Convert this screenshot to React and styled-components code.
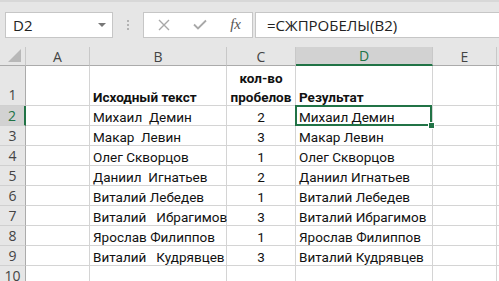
import React from "react";
import styled, { createGlobalStyle } from "styled-components";

const GlobalStyle = createGlobalStyle`
  body {
    margin: 0;
    background: #ffffff;
    font-family: Roboto, "Open Sans", sans-serif;
  }
`;

const columns = ["A", "B", "C", "D", "E"];

const rows = [
  { num: 2, src: "Михаил  Демин", count: "2", res: "Михаил Демин" },
  { num: 3, src: "Макар  Левин", count: "3", res: "Макар Левин" },
  { num: 4, src: "Олег Скворцов", count: "1", res: "Олег Скворцов" },
  { num: 5, src: "Даниил  Игнатьев", count: "2", res: "Даниил Игнатьев" },
  { num: 6, src: "Виталий Лебедев", count: "1", res: "Виталий Лебедев" },
  { num: 7, src: "Виталий   Ибрагимов", count: "3", res: "Виталий Ибрагимов" },
  { num: 8, src: "Ярослав Филиппов", count: "1", res: "Ярослав Филиппов" },
  { num: 9, src: "Виталий   Кудрявцев", count: "3", res: "Виталий Кудрявцев" },
];

function App() {
  return (
    <Window>
      <GlobalStyle />
      <FormulaBar>
        <NameBox>
          <span>D2</span>
          <DropArrow />
        </NameBox>
        <Grip>
          <i />
          <i />
          <i />
        </Grip>
        <IconBox>
          <svg width="12" height="12" viewBox="0 0 12 12">
            <path d="M1 1 L11 11 M11 1 L1 11" stroke="#a8a8a8" strokeWidth="1.4" fill="none" />
          </svg>
          <svg width="14" height="11" viewBox="0 0 14 11">
            <path d="M1 5.5 L5 9.5 L13 1.5" stroke="#a8a8a8" strokeWidth="1.8" fill="none" />
          </svg>
          <Fx>fx</Fx>
        </IconBox>
        <FormulaInput>=СЖПРОБЕЛЫ(B2)</FormulaInput>
      </FormulaBar>

      <Sheet>
        <Corner>
          <svg width="13" height="13" viewBox="0 0 13 13">
            <path d="M13 0 L13 13 L0 13 Z" fill="#b8b8b8" />
          </svg>
        </Corner>
        {columns.map((c) => (
          <ColHead key={c} selected={c === "D"}>
            {c}
          </ColHead>
        ))}
        <ColHead />

        <RowHead tall>1</RowHead>
        <Cell />
        <Cell bold>Исходный текст</Cell>
        <Cell bold center>
          <Stack>
            <span>кол-во</span>
            <span>пробелов</span>
          </Stack>
        </Cell>
        <Cell bold>Результат</Cell>
        <Cell />
        <Cell />

        {rows.map((r) => (
          <React.Fragment key={r.num}>
            <RowHead selected={r.num === 2}>{r.num}</RowHead>
            <Cell />
            <Cell>{r.src}</Cell>
            <Cell center>{r.count}</Cell>
            <Cell active={r.num === 2}>{r.res}</Cell>
            <Cell />
            <Cell />
          </React.Fragment>
        ))}

        <RowHead>10</RowHead>
        <Cell />
        <Cell />
        <Cell />
        <Cell />
        <Cell />
        <Cell />
      </Sheet>
    </Window>
  );
}

export default App;

const Window = styled.div`
  width: 499px;
  height: 281px;
  overflow: hidden;
  background: #ffffff;
`;

const FormulaBar = styled.div`
  height: 45px;
  display: flex;
  align-items: center;
  padding-left: 5px;
  background: #e6e6e6;
  border-top: 2px solid #d8d8d8;
`;

const NameBox = styled.div`
  width: 93px;
  height: 24px;
  padding: 0 6px 0 7px;
  display: flex;
  align-items: center;
  justify-content: space-between;
  background: #ffffff;
  border: 1px solid #c6c6c6;
  font: 15px "Open Sans", sans-serif;
  color: #222222;
`;

const DropArrow = styled.span`
  width: 0;
  height: 0;
  border-left: 4px solid transparent;
  border-right: 4px solid transparent;
  border-top: 4px solid #777777;
`;

const Grip = styled.div`
  width: 30px;
  display: flex;
  flex-direction: column;
  align-items: center;
  gap: 2px;

  i {
    width: 2px;
    height: 2px;
    background: #b2b2b2;
  }
`;

const IconBox = styled.div`
  width: 110px;
  height: 26px;
  display: flex;
  align-items: center;
  justify-content: space-between;
  padding: 0 11px 0 14px;
  box-sizing: border-box;
  background: #ffffff;
  border: 1px solid #c6c6c6;
`;

const Fx = styled.span`
  font: italic 15px "Liberation Serif", serif;
  color: #555555;
`;

const FormulaInput = styled.div`
  flex: 1;
  height: 24px;
  margin-left: 2px;
  padding-left: 11px;
  display: flex;
  align-items: center;
  background: #ffffff;
  border: 1px solid #c6c6c6;
  border-right: none;
  font: 15px "Open Sans", sans-serif;
  color: #222222;
`;

const Sheet = styled.div`
  display: grid;
  grid-template-columns: 26px 64px 137px 69px 137px 64px 1fr;
  grid-template-rows: 19px 40px;
  grid-auto-rows: 20px;
  background: #e6e6e6;
`;

const Corner = styled.div`
  display: flex;
  align-items: flex-end;
  justify-content: flex-end;
  padding: 0 4px 3px 0;
  border-right: 1px solid #c8c8c8;
  border-bottom: 1px solid #ababab;
`;

const ColHead = styled.div`
  display: flex;
  align-items: center;
  justify-content: center;
  background: ${(p) => (p.selected ? "#d2d2d2" : "#e6e6e6")};
  color: ${(p) => (p.selected ? "#217346" : "#444444")};
  border-right: 1px solid #c8c8c8;
  border-bottom: ${(p) => (p.selected ? "2px solid #217346" : "1px solid #ababab")};
  font: 14px "Open Sans", sans-serif;
`;

const RowHead = styled.div`
  display: flex;
  align-items: ${(p) => (p.tall ? "flex-end" : "center")};
  justify-content: center;
  padding-bottom: ${(p) => (p.tall ? "1px" : "0")};
  background: ${(p) => (p.selected ? "#d2d2d2" : "#e6e6e6")};
  color: ${(p) => (p.selected ? "#217346" : "#444444")};
  border-right: ${(p) => (p.selected ? "2px solid #217346" : "1px solid #ababab")};
  border-bottom: 1px solid #d0d0d0;
  font: 14px "Open Sans", sans-serif;
`;

const Cell = styled.div`
  position: relative;
  display: flex;
  align-items: flex-end;
  justify-content: ${(p) => (p.center ? "center" : "flex-start")};
  padding: 0 3px;
  background: #ffffff;
  border-right: 1px solid #d4d4d4;
  border-bottom: 1px solid #d4d4d4;
  white-space: pre;
  line-height: 16px;
  font-family: Roboto, "Open Sans", sans-serif;
  font-size: 13.5px;
  font-weight: ${(p) => (p.bold ? 700 : 400)};
  color: #111111;

  ${(p) =>
    p.active &&
    `
    &::after {
      content: "";
      position: absolute;
      inset: -1px 0 -1px -1px;
      border: 2px solid #217346;
    }
    &::before {
      content: "";
      position: absolute;
      right: -3px;
      bottom: -4px;
      width: 5px;
      height: 5px;
      background: #217346;
      border: 1px solid #ffffff;
      z-index: 2;
    }
  `}
`;

const Stack = styled.div`
  display: flex;
  flex-direction: column;
  align-items: center;
  gap: 3px;
  line-height: 16px;
`;
